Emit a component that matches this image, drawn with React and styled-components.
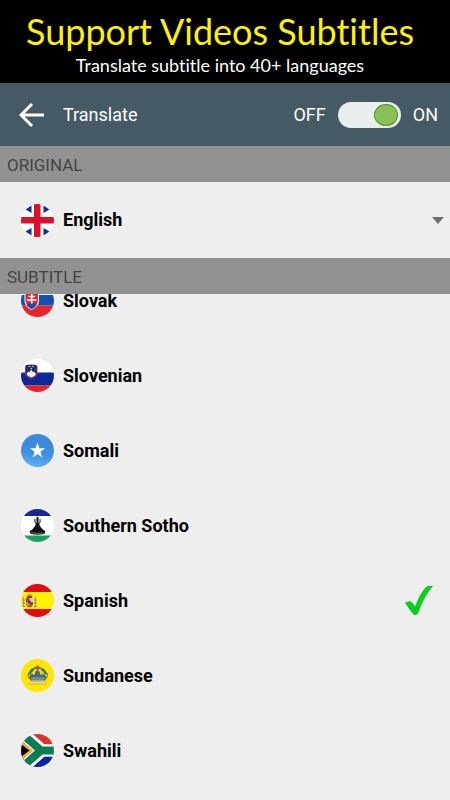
import React, { useLayoutEffect, useRef, useState } from "react";
import styled, { createGlobalStyle } from "styled-components";

const FlagSvg = ({ id, children }) => (
  <Flag viewBox="0 0 66 66" aria-hidden="true">
    <defs>
      <clipPath id={`clip-${id}`}>
        <circle cx="33" cy="33" r="33" />
      </clipPath>
    </defs>
    <g clipPath={`url(#clip-${id})`}>{children}</g>
  </Flag>
);

const EnglishFlag = () => (
  <FlagSvg id="english">
    <rect width="66" height="66" fill="#fff" />
    <path
      d="M9 11L21 3V18ZM57 11L45 3V18ZM9 55L21 48V63ZM57 55L45 48V63Z"
      fill="#0c2ea0"
    />
    <path d="M26 0H39V26H66V39H39V66H26V39H0V26H26Z" fill="#d8122c" />
  </FlagSvg>
);

const SlovakFlag = () => (
  <FlagSvg id="slovak">
    <rect width="66" height="22" fill="#fff" />
    <rect y="22" width="66" height="21" fill="#1250b4" />
    <rect y="43" width="66" height="23" fill="#e8252c" />
    <path d="M7 16H36V34Q35 46 21 52Q8 46 7 34Z" fill="#fff" />
    <path d="M9 18H34V34Q33 44 21 50Q10 44 9 34Z" fill="#e8252c" />
    <path d="M11 42Q16 36 21 39Q27 36 32 42Q27 48 21 50Q14 47 11 42Z" fill="#1250b4" />
    <path d="M21.500 20V39M15 25H28M12 32H31" stroke="#fff" strokeWidth="3" />
  </FlagSvg>
);

const SlovenianFlag = () => (
  <FlagSvg id="slovenian">
    <rect width="66" height="27" fill="#fff" />
    <rect y="27" width="66" height="26" fill="#0a2a9c" />
    <rect y="53" width="66" height="13" fill="#e8202a" />
    <path d="M8 14Q20 10 33 14V28Q32 36 20.500 40Q9 36 8 28Z" fill="#d92534" />
    <path d="M10 12Q20 10 31 12V28Q30 35 20.500 38Q11 35 10 28Z" fill="#143078" />
    <path d="M11 30L15 25L17 27L20.500 21L24 27L26 25L30 30Q28 35 20.500 37Q13 35 11 30Z" fill="#fff" />
    <g fill="#f5d93b">
      <circle cx="17" cy="15" r="1.500" />
      <circle cx="24" cy="15" r="1.500" />
      <circle cx="20.500" cy="19" r="1.500" />
    </g>
  </FlagSvg>
);

const SomaliFlag = () => (
  <FlagSvg id="somali">
    <defs>
      <linearGradient id="somali-sky" x1="0.600" y1="0" x2="0.400" y2="1">
        <stop offset="0" stopColor="#3a86dc" />
        <stop offset="0.600" stopColor="#4090e2" />
        <stop offset="1" stopColor="#5cb2f2" />
      </linearGradient>
    </defs>
    <rect width="66" height="66" fill="url(#somali-sky)" />
    <path
      d="M33 17L36.800 28.500H48L39 35.500L42.300 47L33 40L23.700 47L27 35.500L18 28.500H29.200Z"
      fill="#fff"
    />
  </FlagSvg>
);

const SothoFlag = () => (
  <FlagSvg id="sotho">
    <rect width="66" height="66" fill="#fff" />
    <rect width="66" height="14" fill="#152a90" />
    <rect y="53" width="66" height="13" fill="#17a05a" />
    <path d="M33 16V30" stroke="#111" strokeWidth="4" />
    <path d="M28 20Q26 27 31 30M38 20Q40 27 35 30" fill="none" stroke="#111" strokeWidth="2" />
    <path d="M30 28H36Q37 37 48 44Q50 48 45 50Q33 53 21 50Q16 48 18 44Q29 37 30 28Z" fill="#111" />
    <path d="M21 47Q33 51 45 47" fill="none" stroke="#bbb" strokeWidth="2" strokeDasharray="2 2" />
  </FlagSvg>
);

const SpanishFlag = () => (
  <FlagSvg id="spanish">
    <rect width="66" height="66" fill="#fff200" />
    <rect width="66" height="16" fill="#e20a17" />
    <rect y="50" width="66" height="16" fill="#e20a17" />
    <path d="M5 25V45M29 25V45" stroke="#b8a878" strokeWidth="3" />
    <path d="M3 32H8M3 38H8M26 32H31M26 38H31" stroke="#c46a3a" strokeWidth="2" />
    <path d="M3 45H8M26 45H31" stroke="#6b7a8c" strokeWidth="2" />
    <path d="M11 25Q17 17 23 25L22 28H12Z" fill="#b0371f" />
    <path d="M12 24Q17 20 22 24" fill="none" stroke="#e5b52f" strokeWidth="1.500" />
    <path d="M10 28H24V40Q23 46 17 47Q11 46 10 40Z" fill="#b3384b" />
    <path d="M17 28H24V36H17Z" fill="#d7c4cb" />
    <path d="M10 36H17V45Q11 44 10 40Z" fill="#d9922f" />
    <circle cx="17" cy="36" r="3" fill="#26479b" />
  </FlagSvg>
);

const SundaneseFlag = () => (
  <FlagSvg id="sundanese">
    <rect width="66" height="66" fill="#ffe600" />
    <path d="M14 28L20 19L33 14L46 19L53 28L48 43H19Z" fill="#d9cf8a" />
    <path d="M14 29L20 20L29 16L25 23L19 32ZM53 29L46 20L37 16L41 23L48 32Z" fill="#2f8049" />
    <path d="M27 17L33 13L39 17L36 21H30Z" fill="#c2453a" />
    <path d="M19 31Q22 23 33 20Q45 23 48 31Z" fill="#f3d325" />
    <path d="M16 36L22 29L26 33L30 24H36L40 33L44 29L51 36L47 43H20Z" fill="#3f6478" />
    <path d="M33 20V36" stroke="#5a6a60" strokeWidth="3" />
    <path d="M14 29Q13 37 20 43M53 29Q54 37 47 43" fill="none" stroke="#a3622e" strokeWidth="2" />
    <path d="M20 38H47M21 42H46" stroke="#b9cdd6" strokeWidth="1.500" />
    <path d="M17 46Q25 44 33 46Q41 44 50 46L48 51Q40 48 33 50Q26 48 19 51Z" fill="#efe6b4" stroke="#9b8a3a" strokeWidth="1" />
  </FlagSvg>
);

const SwahiliFlag = () => (
  <FlagSvg id="swahili">
    <rect width="66" height="33" fill="#e0332d" />
    <rect y="33" width="66" height="33" fill="#0a25a2" />
    <path d="M0 -4L42 33L0 70M38 33H70" fill="none" stroke="#fff" strokeWidth="25" />
    <path d="M0 -2L40 33L0 68M36 33H70" fill="none" stroke="#0b7d55" strokeWidth="16" />
    <path d="M-8 8L25 33L-8 58Z" fill="#fbb32d" />
    <path d="M-8 14L17 33L-8 52Z" fill="#050505" />
  </FlagSvg>
);

const languages = [
  { name: "Slovak", Icon: SlovakFlag },
  { name: "Slovenian", Icon: SlovenianFlag },
  { name: "Somali", Icon: SomaliFlag },
  { name: "Southern Sotho", Icon: SothoFlag },
  { name: "Spanish", Icon: SpanishFlag },
  { name: "Sundanese", Icon: SundaneseFlag },
  { name: "Swahili", Icon: SwahiliFlag },
];

const LanguageItem = ({ language, checked, onSelect }) => {
  const { name, Icon } = language;

  return (
    <LanguageRow>
      <Radio
        type="radio"
        name="subtitle"
        value={name}
        checked={checked}
        onChange={() => onSelect(name)}
      />
      <Icon />
      <LanguageName>{name}</LanguageName>
      {checked && (
        <Tick viewBox="0 0 30 32" aria-hidden="true">
          <path
            d="M1 18Q4 15.500 7 16.500Q9 18 11 21.500Q16 8 22 2Q25 0 29 1Q20 11 14 28.500Q12 31 9.500 29.500Q5 24 1 18Z"
            fill="#08d01c"
          />
        </Tick>
      )}
    </LanguageRow>
  );
};

const App = () => {
  const [enabled, setEnabled] = useState(true);
  const [subtitle, setSubtitle] = useState("Spanish");
  const listRef = useRef(null);

  // open the list part way down the first row
  useLayoutEffect(() => {
    listRef.current.scrollTop = 31;
  }, []);

  return (
    <Page>
      <GlobalStyle />
      <Banner>
        <BannerTitle>Support Videos Subtitles</BannerTitle>
        <BannerText>Translate subtitle into 40+ languages</BannerText>
      </Banner>
      <Toolbar>
        <BackButton type="button" aria-label="Back">
          <svg width="26" height="26" viewBox="0 0 26 26" fill="none">
            <path d="M25 13H3M13 2L2 13L13 24" stroke="#fff" strokeWidth="3" />
          </svg>
        </BackButton>
        <ToolbarTitle>Translate</ToolbarTitle>
        <SwitchLabel htmlFor="translate">OFF</SwitchLabel>
        <Switch
          id="translate"
          type="checkbox"
          checked={enabled}
          onChange={() => setEnabled(!enabled)}
        />
        <SwitchLabel htmlFor="translate">ON</SwitchLabel>
      </Toolbar>
      <SectionTitle id="original">ORIGINAL</SectionTitle>
      <OriginalRow>
        <EnglishFlag />
        <OriginalSelect aria-labelledby="original" defaultValue="English">
          <option>English</option>
        </OriginalSelect>
        <Caret viewBox="0 0 12 7" aria-hidden="true">
          <path d="M0 0H12L6 7Z" fill="#6f6f6f" />
        </Caret>
      </OriginalRow>
      <SectionTitle id="subtitle">SUBTITLE</SectionTitle>
      <LanguageList ref={listRef} role="radiogroup" aria-labelledby="subtitle">
        {languages.map((language) => (
          <LanguageItem
            key={language.name}
            language={language}
            checked={language.name === subtitle}
            onSelect={setSubtitle}
          />
        ))}
      </LanguageList>
    </Page>
  );
};

export default App;

const GlobalStyle = createGlobalStyle`
  * {
    box-sizing: border-box;
  }

  body {
    margin: 0;
    background: #eee;
    font-family: Roboto, sans-serif;
  }
`;

const Page = styled.main`
  height: 100vh;

  display: flex;
  flex-direction: column;
`;

const Banner = styled.header`
  flex: none;
  padding: 8px 18px 7px 8px;

  text-align: center;
  font-family: Lato, sans-serif;
  font-variant-ligatures: none;
  background: #000;
`;

const BannerTitle = styled.h1`
  margin: 0;

  font-size: 36px;
  font-weight: 400;
  line-height: 46px;
  white-space: nowrap;
  color: #fff200;
`;

const BannerText = styled.p`
  margin: 0;

  font-size: 18px;
  line-height: 22px;
  color: #fff;
`;

const Toolbar = styled.div`
  flex: none;
  height: 63px;
  padding: 0 12px 0 19px;

  display: flex;
  align-items: center;
  gap: 12px;

  color: #fff;
  background: #455a64;
`;

const BackButton = styled.button`
  padding: 0;
  width: 32px;

  display: flex;

  border: 0;
  background: none;
  cursor: pointer;
`;

const ToolbarTitle = styled.h2`
  margin: 0;
  flex: 1;

  font-size: 18px;
  font-weight: 400;
`;

const SwitchLabel = styled.label`
  font-size: 18px;
`;

const Switch = styled.input`
  margin: 0;
  padding: 3px;
  width: 63px;
  height: 26px;

  display: flex;
  align-items: center;
  justify-content: ${(props) => (props.checked ? "flex-end" : "flex-start")};

  appearance: none;
  border-radius: 13px;
  background: #e8eeee;
  cursor: pointer;

  &::before {
    content: "";
    width: 22px;
    height: 20px;
    border: 1px solid #4f9410;
    border-radius: 50%;
    background: #8ac05a;
  }
`;

const SectionTitle = styled.h3`
  margin: 0;
  flex: none;
  padding: 2px 7px 0;

  font-size: 17px;
  font-weight: 400;
  line-height: 34px;
  color: #444;
  background: #919191;
`;

const OriginalRow = styled.div`
  flex: none;
  height: 76px;
  padding: 0 6px 0 21px;

  display: flex;
  align-items: center;
  gap: 9px;
`;

const OriginalSelect = styled.select`
  padding: 0;
  flex: 1;

  font: 700 18px/24px Roboto, sans-serif;
  color: #000;

  appearance: none;
  border: 0;
  background: none;
`;

const Caret = styled.svg`
  width: 12px;
  height: 7px;
  pointer-events: none;
`;

const Flag = styled.svg`
  flex: none;
  width: 33px;
  height: 33px;
`;

const LanguageList = styled.div`
  flex: 1;
  min-height: 0;
  padding-bottom: 48px;

  overflow-y: auto;
  scrollbar-width: none;
`;

const LanguageRow = styled.label`
  height: 75px;
  padding: 0 16px 0 21px;

  display: flex;
  align-items: center;
  gap: 9px;

  cursor: pointer;
`;

const Radio = styled.input`
  position: absolute;
  margin: 0;
  opacity: 0;
`;

const LanguageName = styled.span`
  flex: 1;

  font-size: 18px;
  font-weight: 700;
  color: #000;
`;

const Tick = styled.svg`
  width: 30px;
  height: 32px;
`;
